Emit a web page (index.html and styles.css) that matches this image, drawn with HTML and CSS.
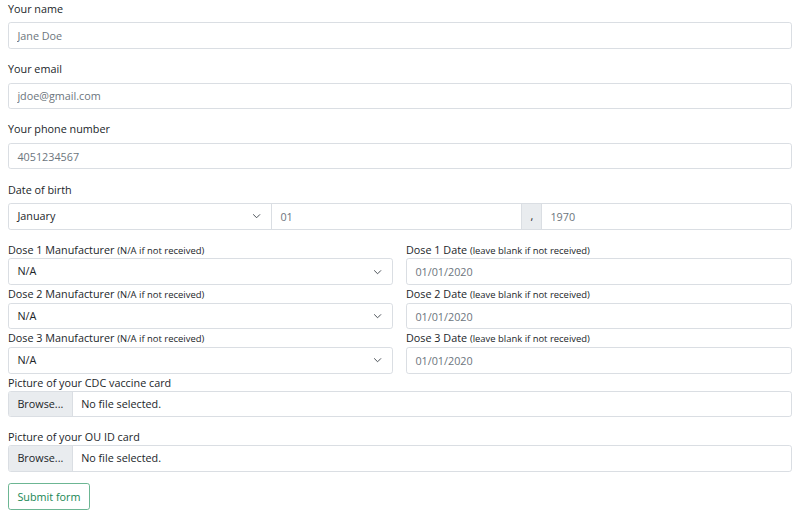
FILE: index.html
```html
<!DOCTYPE html>
<html lang="en">
<head>
<meta charset="utf-8">
<title>Vaccine form</title>
<link rel="stylesheet" href="styles.css">
</head>
<body>
<form class="form">
  <div class="group">
    <label class="label">Your name</label>
    <input class="control" type="text" placeholder="Jane Doe">
  </div>
  <div class="group">
    <label class="label">Your email</label>
    <input class="control" type="text" placeholder="jdoe@gmail.com">
  </div>
  <div class="group">
    <label class="label">Your phone number</label>
    <input class="control" type="text" placeholder="4051234567">
  </div>
  <div class="group">
    <label class="label">Date of birth</label>
    <div class="input-group">
      <div class="select grow-select">
        <span class="select-text">January</span>
        <svg class="chev" viewBox="0 0 16 16"><path d="m2 5 6 6 6-6"/></svg>
      </div>
      <input class="control grow" type="text" placeholder="01">
      <span class="addon">,</span>
      <input class="control grow" type="text" placeholder="1970">
    </div>
  </div>

  <div class="dose-row">
    <div class="col">
      <label class="label tight">Dose 1 Manufacturer <small class="hint">(N/A if not received)</small></label>
      <div class="select">
        <span class="select-text">N/A</span>
        <svg class="chev" viewBox="0 0 16 16"><path d="m2 5 6 6 6-6"/></svg>
      </div>
    </div>
    <div class="col">
      <label class="label tight">Dose 1 Date <small class="hint">(leave blank if not received)</small></label>
      <input class="control" type="text" placeholder="01/01/2020">
    </div>
  </div>
  <div class="dose-row">
    <div class="col">
      <label class="label tight">Dose 2 Manufacturer <small class="hint">(N/A if not received)</small></label>
      <div class="select">
        <span class="select-text">N/A</span>
        <svg class="chev" viewBox="0 0 16 16"><path d="m2 5 6 6 6-6"/></svg>
      </div>
    </div>
    <div class="col">
      <label class="label tight">Dose 2 Date <small class="hint">(leave blank if not received)</small></label>
      <input class="control" type="text" placeholder="01/01/2020">
    </div>
  </div>
  <div class="dose-row">
    <div class="col">
      <label class="label tight">Dose 3 Manufacturer <small class="hint">(N/A if not received)</small></label>
      <div class="select">
        <span class="select-text">N/A</span>
        <svg class="chev" viewBox="0 0 16 16"><path d="m2 5 6 6 6-6"/></svg>
      </div>
    </div>
    <div class="col">
      <label class="label tight">Dose 3 Date <small class="hint">(leave blank if not received)</small></label>
      <input class="control" type="text" placeholder="01/01/2020">
    </div>
  </div>

  <div class="group">
    <label class="label tight">Picture of your CDC vaccine card</label>
    <div class="file">
      <span class="file-btn">Browse...</span>
      <span class="file-text">No file selected.</span>
    </div>
  </div>
  <div class="group">
    <label class="label tight">Picture of your OU ID card</label>
    <div class="file">
      <span class="file-btn">Browse...</span>
      <span class="file-text">No file selected.</span>
    </div>
  </div>
  <button class="btn" type="button">Submit form</button>
</form>
</body>
</html>
```

FILE: styles.css
```css
html, body {
  margin: 0;
  padding: 0;
  background: #ffffff;
}

body {
  font-family: "Open Sans", "Noto Sans", "DejaVu Sans", sans-serif;
  font-size: 10.8px;
  line-height: 16.8px;
  color: #212529;
}

.form {
  display: flex;
  flex-direction: column;
  padding: 0 14px 0 8px;
}

.group {
  display: flex;
  flex-direction: column;
  margin-bottom: 11.2px;
}

.label {
  display: block;
  padding-top: 1px;
  line-height: 15.8px;
  margin-bottom: 5.6px;
}

.label.tight {
  margin-bottom: 0;
}

.hint {
  font-size: 0.875em;
}

.control {
  box-sizing: border-box;
  display: block;
  width: 100%;
  height: 26.6px;
  margin: 0;
  padding: 0 8.4px;
  font-family: inherit;
  font-size: 10.8px;
  color: #212529;
  background: #ffffff;
  border: 1px solid #dadee3;
  border-radius: 2.8px;
  outline: none;
}

.control::placeholder {
  color: #6c757d;
  opacity: 1;
}

.select {
  box-sizing: border-box;
  display: flex;
  align-items: center;
  justify-content: space-between;
  height: 26.6px;
  padding: 0 8.4px;
  background: #ffffff;
  border: 1px solid #dadee3;
  border-radius: 2.8px;
}

.select-text {
  color: #212529;
}

.chev {
  width: 11.2px;
  height: 8.4px;
  fill: none;
  stroke: #3f454b;
  stroke-width: 1.8;
  stroke-linecap: round;
  stroke-linejoin: round;
}

.input-group {
  display: flex;
  align-items: stretch;
}

.input-group .grow-select {
  flex: 0 0 264px;
  border-radius: 2.8px 0 0 2.8px;
}

.input-group .grow {
  flex: 1 1 0;
  min-width: 0;
  border-radius: 0;
  margin-left: -1px;
}

.input-group .grow:last-child {
  border-radius: 0 2.8px 2.8px 0;
}

.addon {
  display: flex;
  align-items: center;
  box-sizing: border-box;
  width: 21px;
  margin-left: -1px;
  padding: 0 8.4px;
  background: #e9ecef;
  border: 1px solid #dadee3;
  color: #212529;
  position: relative;
  z-index: 1;
}

.dose-row {
  display: grid;
  grid-template-columns: 385px 1fr;
  column-gap: 13px;
}

.col {
  display: flex;
  flex-direction: column;
}

.file {
  box-sizing: border-box;
  display: flex;
  align-items: stretch;
  height: 26.6px;
  background: #ffffff;
  border: 1px solid #dadee3;
  border-radius: 2.8px;
  overflow: hidden;
}

.file-btn {
  display: flex;
  align-items: center;
  padding: 0 8.4px;
  background: #e9ecef;
  border-right: 1px solid #dadee3;
  color: #212529;
}

.file-text {
  display: flex;
  align-items: center;
  padding-left: 8.4px;
  color: #212529;
}

.btn {
  align-self: flex-start;
  box-sizing: border-box;
  height: 26.6px;
  padding: 0 8.4px;
  font-family: inherit;
  font-size: 10.8px;
  color: #198754;
  background: #ffffff;
  border: 1px solid #6cb693;
  border-radius: 2.8px;
  cursor: pointer;
}
```
